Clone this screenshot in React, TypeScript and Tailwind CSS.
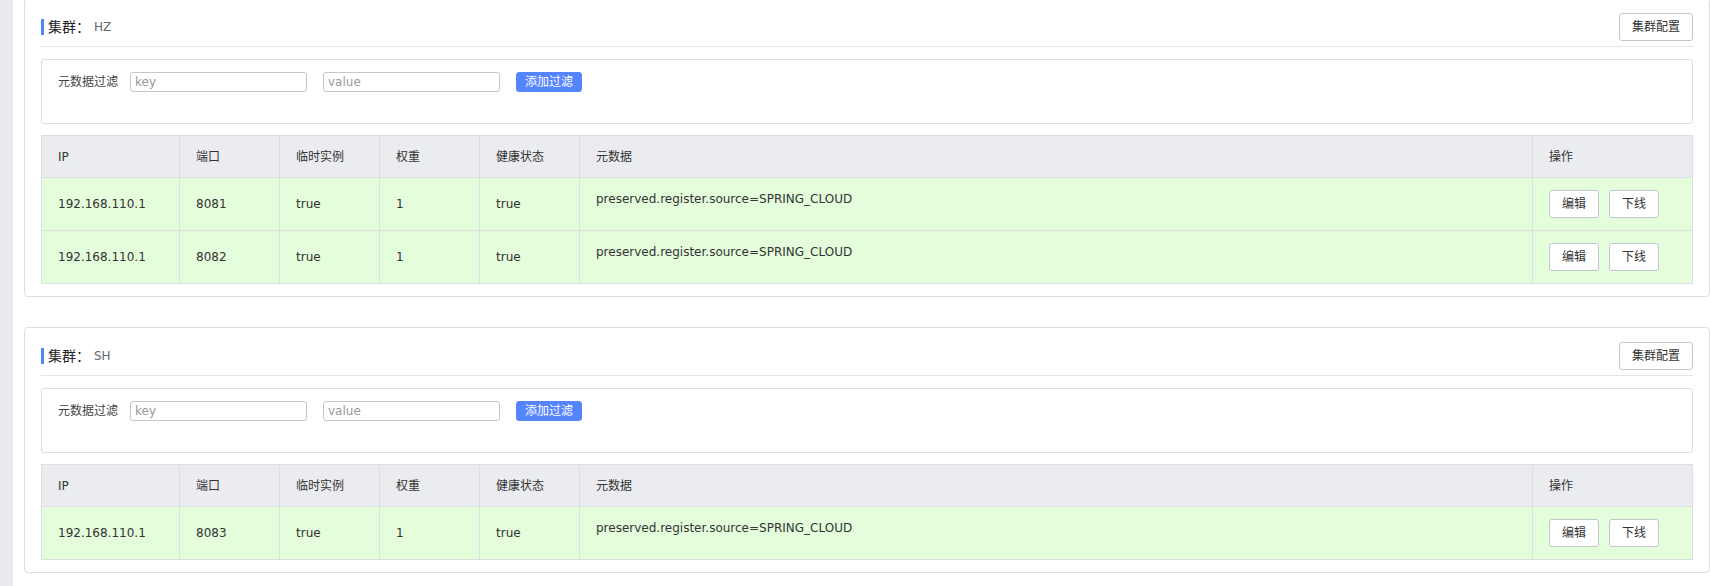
import React from "react";

type Row = { ip: string; port: string };
type Cluster = { name: string; rows: Row[] };

const clusters: Cluster[] = [
  {
    name: "HZ",
    rows: [
      { ip: "192.168.110.1", port: "8081" },
      { ip: "192.168.110.1", port: "8082" },
    ],
  },
  {
    name: "SH",
    rows: [{ ip: "192.168.110.1", port: "8083" }],
  },
];

const headers = ["IP", "端口", "临时实例", "权重", "健康状态", "元数据", "操作"];

function Btn({ children }: { children: React.ReactNode }) {
  return (
    <button className="h-[28px] rounded-[3px] border border-[#c4c6cf] bg-white px-[12px] text-[12px] leading-[26px] text-[#333]">
      {children}
    </button>
  );
}

function ClusterCard({ c }: { c: Cluster }) {
  return (
    <div className="rounded-[4px] border border-[#dcdee3] bg-white px-[16px] pb-[12px] pt-[14px]">
      <div className="flex h-[28px] items-center justify-between">
        <div className="flex items-center">
          <span className="h-[16px] w-[3px] bg-[#5584ff]" />
          <span className="ml-[4px] text-[14px] leading-[16px] text-[#222]">集群：</span>
          <span className="ml-[4px] text-[12px] leading-[16px] text-[#666]">{c.name}</span>
        </div>
        <Btn>集群配置</Btn>
      </div>
      <div className="mt-[5px] h-px bg-[#e6e6e6]" />
      <div className="mt-[12px] h-[65px] rounded-[3px] border border-[#dcdee3] pl-[16px] pt-[12px]">
        <div className="flex h-[20px] items-center">
          <span className="pr-[12px] text-[12px] text-[#444]">元数据过滤</span>
          <input
            placeholder="key"
            className="h-[20px] w-[177px] rounded-[3px] border border-[#c4c6cf] bg-white px-[4px] text-[12px] text-[#333] outline-none placeholder:text-[#999]"
          />
          <input
            placeholder="value"
            className="ml-[16px] h-[20px] w-[177px] rounded-[3px] border border-[#c4c6cf] bg-white px-[4px] text-[12px] text-[#333] outline-none placeholder:text-[#999]"
          />
          <button className="ml-[16px] h-[20px] rounded-[3px] border border-[#5584ff] bg-[#5584ff] px-[8px] text-[12px] leading-[18px] text-white">
            添加过滤
          </button>
        </div>
      </div>
      <div className="mt-[11px] border border-[#dcdee3]">
        <div className="grid h-[41px] grid-cols-[137px_100px_100px_100px_100px_1fr_160px] bg-[#ebecf0]">
          {headers.map((h, i) => (
            <div
              key={h}
              className={
                "flex items-center px-[16px] text-[12px] text-[#333] " +
                (i > 0 ? "border-l border-[#dcdee3]" : "")
              }
            >
              {h}
            </div>
          ))}
        </div>
        {c.rows.map((r) => (
          <div
            key={r.port}
            className="grid h-[53px] grid-cols-[137px_100px_100px_100px_100px_1fr_160px] border-t border-[#dcdee3] bg-[#e4fdda] text-[12px] text-[#333]"
          >
            <div className="flex items-center px-[16px]">{r.ip}</div>
            <div className="flex items-center border-l border-[#dcdee3] px-[16px]">{r.port}</div>
            <div className="flex items-center border-l border-[#dcdee3] px-[16px]">true</div>
            <div className="flex items-center border-l border-[#dcdee3] px-[16px]">1</div>
            <div className="flex items-center border-l border-[#dcdee3] px-[16px]">true</div>
            <div className="border-l border-[#dcdee3] px-[16px] pt-[12px] leading-[18px]">
              preserved.register.source=SPRING_CLOUD
            </div>
            <div className="flex items-center gap-[10px] border-l border-[#dcdee3] px-[16px]">
              <Btn>编辑</Btn>
              <Btn>下线</Btn>
            </div>
          </div>
        ))}
      </div>
    </div>
  );
}

export default function App() {
  return (
    <div className="flex h-[586px] w-[1710px] overflow-hidden bg-white font-['DejaVu_Sans','Noto_Sans_CJK_SC',sans-serif] text-[12px] text-[#333]">
      <div className="w-[13px] shrink-0 bg-[#e9eaee]" />
      <div className="flex-1 pl-[11px]">
        <div className="-mt-[2px] flex flex-col gap-[30px]">
          {clusters.map((c) => (
            <ClusterCard key={c.name} c={c} />
          ))}
        </div>
      </div>
    </div>
  );
}
